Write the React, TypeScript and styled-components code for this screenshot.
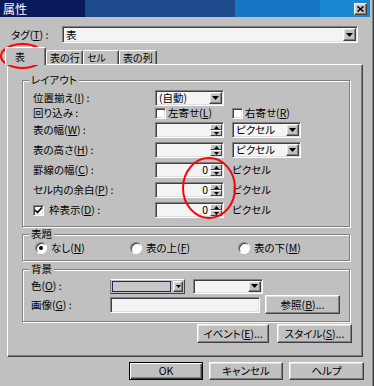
import React from "react";
import styled, { createGlobalStyle, css } from "styled-components";

// classic win32 bevels
const raised = css`
  border: 1px solid;
  border-color: #ffffff #404040 #404040 #ffffff;
  box-shadow: inset -1px -1px 0 #808080, inset 1px 1px 0 #dfdfdf;
`;

const sunken = css`
  border: 1px solid;
  border-color: #808080 #ffffff #ffffff #808080;
  box-shadow: inset 1px 1px 0 #404040, inset -1px -1px 0 #dfdfdf;
`;

const GlobalStyle = createGlobalStyle`
  html, body {
    margin: 0;
    padding: 0;
    background: #c0c0c0;
  }
  body {
    font-family: "Noto Sans CJK JP", "Liberation Sans", sans-serif;
    font-size: 10.5px;
    line-height: 12px;
    font-feature-settings: "palt";
    color: #000;
  }
  * {
    box-sizing: border-box;
  }
  u {
    text-underline-offset: 1px;
  }
`;

const Frame = styled.div`
  position: relative;
  width: 374px;
  height: 386px;
  display: flex;
  flex-direction: column;
  padding-right: 3px;
  border-right: 1px solid #404040;
  box-shadow: inset -1px 0 0 #808080;
  background: #c0c0c0;
  overflow: hidden;
`;

const TitleBar = styled.div`
  height: 17px;
  display: flex;
  align-items: center;
  justify-content: space-between;
  padding: 0 3px;
  background: linear-gradient(
    to right,
    #0b1a5c 0 85px,
    #1d4b8b 85px 235px,
    #1576c6 235px 320px,
    #1b88d3 320px
  );
  color: #fff;
  font-size: 12px;
`;

const CloseButton = styled.div`
  width: 13px;
  height: 12px;
  ${raised};
  background: #c0c0c0;
  display: flex;
  align-items: center;
  justify-content: center;
`;

const TagRow = styled.div`
  margin-top: 9px;
  padding-left: 11px;
  display: flex;
  align-items: center;
`;

const FieldLabel = styled.span<{ $w: number }>`
  width: ${(p) => p.$w}px;
  flex-shrink: 0;
  white-space: nowrap;
  display: flex;
  align-items: center;
  gap: 5px;
`;

const Combo = styled.div<{ $w: number; $h?: number }>`
  width: ${(p) => p.$w}px;
  height: ${(p) => p.$h ?? 16}px;
  ${sunken};
  background: #f4f4f4;
  display: flex;
  align-items: stretch;
  padding: 1px;
`;

const ComboText = styled.span`
  flex: 1;
  padding-left: 2px;
  display: flex;
  align-items: center;
  white-space: nowrap;
`;

const DropButton = styled.div<{ $w?: number }>`
  width: ${(p) => p.$w ?? 13}px;
  flex-shrink: 0;
  ${raised};
  background: #c0c0c0;
  display: flex;
  align-items: center;
  justify-content: center;
`;

const TabStrip = styled.div`
  position: relative;
  z-index: 1;
  margin-top: 4px;
  height: 17px;
  padding-left: 5px;
  display: flex;
  align-items: flex-end;
`;

const Tab = styled.div<{ $w: number; $active?: boolean }>`
  width: ${(p) => p.$w}px;
  height: ${(p) => (p.$active ? 18 : 14)}px;
  margin-bottom: ${(p) => (p.$active ? -1 : 0)}px;
  border: 1px solid;
  border-bottom: none;
  border-color: #ffffff #404040 transparent #ffffff;
  border-radius: 2px 2px 0 0;
  box-shadow: inset -1px 0 0 #808080;
  background: #c0c0c0;
  display: flex;
  align-items: center;
  padding-left: ${(p) => (p.$active ? 9 : 3)}px;
  font-size: 10px;
  white-space: nowrap;
`;

const TabPage = styled.div`
  margin-left: 7px;
  width: 356px;
  height: 293px;
  border: 1px solid;
  border-color: #ffffff #404040 #404040 #ffffff;
  box-shadow: inset -1px -1px 0 #808080;
  padding: 15px 12px 0 14px;
  display: flex;
  flex-direction: column;
`;

const GroupBox = styled.div<{ $mt?: number }>`
  margin-top: ${(p) => p.$mt ?? 0}px;
  border: 1px solid #808080;
  box-shadow: inset 1px 1px 0 #ffffff, 1px 1px 0 #ffffff;
  display: flex;
  flex-direction: column;
`;

const Legend = styled.div`
  align-self: flex-start;
  margin: -7px 0 0 6px;
  padding: 0 2px;
  height: 12px;
  line-height: 12px;
  background: #c0c0c0;
  white-space: nowrap;
`;

const GroupBody = styled.div<{ $pt: number; $pb: number; $pl: number }>`
  padding: ${(p) => p.$pt}px 0 ${(p) => p.$pb}px ${(p) => p.$pl}px;
  display: flex;
  flex-direction: column;
`;

const FormRow = styled.div<{ $h: number; $mt?: number }>`
  height: ${(p) => p.$h}px;
  margin-top: ${(p) => p.$mt ?? 0}px;
  display: flex;
  align-items: center;
  gap: 8px;
  flex-shrink: 0;
`;

const CheckOption = styled.label<{ $w?: number }>`
  width: ${(p) => (p.$w ? `${p.$w}px` : "auto")};
  display: flex;
  align-items: center;
  gap: 2px;
  white-space: nowrap;
`;

const CheckBox = styled.span`
  width: 11px;
  height: 11px;
  flex-shrink: 0;
  ${sunken};
  background: #fff;
  display: flex;
  align-items: center;
  justify-content: center;
`;

const SpinBox = styled.div`
  width: 69px;
  height: 16px;
  ${sunken};
  background: #f4f4f4;
  display: flex;
  align-items: stretch;
  padding: 1px;
`;

const SpinValue = styled.span`
  flex: 1;
  display: flex;
  align-items: center;
  justify-content: flex-end;
  padding-right: 2px;
`;

const SpinButtons = styled.div`
  width: 12px;
  display: flex;
  flex-direction: column;
`;

const SpinHalf = styled.div`
  flex: 1;
  border: 1px solid;
  border-color: #ffffff #404040 #404040 #ffffff;
  background: #c0c0c0;
  display: flex;
  align-items: center;
  justify-content: center;
`;

const UnitText = styled.span`
  white-space: nowrap;
`;

const RadioItem = styled.label<{ $w?: number }>`
  width: ${(p) => (p.$w ? `${p.$w}px` : "auto")};
  display: flex;
  align-items: center;
  gap: 4px;
  white-space: nowrap;
`;

const RadioDot = styled.span<{ $checked?: boolean }>`
  width: 12px;
  height: 12px;
  border-radius: 50%;
  border: 1px solid;
  border-color: #808080 #ffffff #ffffff #808080;
  box-shadow: inset 1px 1px 0 #404040;
  background: #fff;
  display: flex;
  align-items: center;
  justify-content: center;
  &::after {
    content: "";
    display: ${(p) => (p.$checked ? "block" : "none")};
    width: 4px;
    height: 4px;
    border-radius: 50%;
    background: #000;
  }
`;

const ColorCombo = styled.div`
  width: 75px;
  height: 15px;
  border: 1px solid;
  border-color: #ffffff #404040 #404040 #808080;
  background: #c0c0c0;
  display: flex;
  align-items: stretch;
  padding: 1px;
  gap: 2px;
`;

const Swatch = styled.div`
  flex: 1;
  border: 1px solid #1c2a5e;
  background: #c8c8c8;
`;

const TextInput = styled.div<{ $w: number }>`
  width: ${(p) => p.$w}px;
  height: 16px;
  ${sunken};
  background: #f4f4f4;
`;

const PushButton = styled.div<{ $w: number; $h?: number; $default?: boolean }>`
  width: ${(p) => p.$w}px;
  height: ${(p) => p.$h ?? 19}px;
  flex-shrink: 0;
  background: #c0c0c0;
  display: flex;
  align-items: center;
  justify-content: center;
  white-space: nowrap;
  ${(p) =>
    p.$default
      ? css`
          border: 1px solid #000;
          box-shadow: inset 1px 1px 0 #fff, inset -1px -1px 0 #404040,
            inset -2px -2px 0 #808080;
        `
      : raised}
`;

const ActionRow = styled.div`
  margin-top: 2px;
  margin-right: -2px;
  display: flex;
  justify-content: flex-end;
  gap: 8px;
`;

const Footer = styled.div`
  margin-top: 5px;
  padding-right: 6px;
  display: flex;
  justify-content: flex-end;
  gap: 6px;
`;

const Marks = styled.svg`
  position: absolute;
  left: 0;
  top: 0;
  pointer-events: none;
`;

const Tri = ({ up, w = 7, h = 4 }: { up?: boolean; w?: number; h?: number }) => (
  <svg width={w} height={h} viewBox={`0 0 ${w} ${h}`}>
    <polygon
      points={up ? `${w / 2},0 ${w},${h} 0,${h}` : `0,0 ${w},0 ${w / 2},${h}`}
      fill="#000"
    />
  </svg>
);

const Check = () => (
  <svg width="9" height="9" viewBox="0 0 9 9">
    <polyline points="1,4 3.5,6.5 8,1.5" fill="none" stroke="#000" strokeWidth="1.6" />
  </svg>
);

const Spin = ({ value }: { value: string }) => (
  <SpinBox>
    <SpinValue>{value}</SpinValue>
    <SpinButtons>
      <SpinHalf>
        <Tri up w={5} h={3} />
      </SpinHalf>
      <SpinHalf>
        <Tri w={5} h={3} />
      </SpinHalf>
    </SpinButtons>
  </SpinBox>
);

const Select = ({ w, text, h }: { w: number; text?: string; h?: number }) => (
  <Combo $w={w} $h={h}>
    <ComboText>{text}</ComboText>
    <DropButton>
      <Tri />
    </DropButton>
  </Combo>
);

export default function App() {
  return (
    <>
      <GlobalStyle />
      <Frame>
        <TitleBar>
          <span>属性</span>
          <CloseButton>
            <svg width="7" height="6" viewBox="0 0 7 6">
              <path d="M0.5 0.5 L6.5 5.5 M6.5 0.5 L0.5 5.5" stroke="#000" strokeWidth="1.5" />
            </svg>
          </CloseButton>
        </TitleBar>

        <TagRow>
          <FieldLabel $w={51}>
            <span>
              タグ(<u>T</u>) :
            </span>
          </FieldLabel>
          <Select w={296} h={17} text="表" />
        </TagRow>

        <TabStrip>
          <Tab $w={41} $active>
            表
          </Tab>
          <Tab $w={37}>表の行</Tab>
          <Tab $w={36}>セル</Tab>
          <Tab $w={38}>表の列</Tab>
        </TabStrip>

        <TabPage>
          <GroupBox>
            <Legend>レイアウト</Legend>
            <GroupBody $pt={3} $pb={6} $pl={10}>
              <FormRow $h={17}>
                <FieldLabel $w={114}>
                  <span>
                    位置揃え(<u>I</u>) :
                  </span>
                </FieldLabel>
                <Select w={69} text="(自動)" />
              </FormRow>
              <FormRow $h={14}>
                <FieldLabel $w={114}>回り込み :</FieldLabel>
                <CheckOption $w={69}>
                  <CheckBox />
                  <span>
                    左寄せ(<u>L</u>)
                  </span>
                </CheckOption>
                <CheckOption>
                  <CheckBox />
                  <span>
                    右寄せ(<u>R</u>)
                  </span>
                </CheckOption>
              </FormRow>
              <FormRow $h={20}>
                <FieldLabel $w={114}>
                  <span>
                    表の幅(<u>W</u>) :
                  </span>
                </FieldLabel>
                <Spin value="" />
                <Select w={69} text="ピクセル" />
              </FormRow>
              <FormRow $h={20}>
                <FieldLabel $w={114}>
                  <span>
                    表の高さ(<u>H</u>) :
                  </span>
                </FieldLabel>
                <Spin value="" />
                <Select w={69} text="ピクセル" />
              </FormRow>
              <FormRow $h={20}>
                <FieldLabel $w={114}>
                  <span>
                    罫線の幅(<u>C</u>) :
                  </span>
                </FieldLabel>
                <Spin value="0" />
                <UnitText>ピクセル</UnitText>
              </FormRow>
              <FormRow $h={20}>
                <FieldLabel $w={114}>
                  <span>
                    セル内の余白(<u>P</u>) :
                  </span>
                </FieldLabel>
                <Spin value="0" />
                <UnitText>ピクセル</UnitText>
              </FormRow>
              <FormRow $h={20}>
                <FieldLabel $w={114}>
                  <CheckBox>
                    <Check />
                  </CheckBox>
                  <span>
                    枠表示(<u>D</u>) :
                  </span>
                </FieldLabel>
                <Spin value="0" />
                <UnitText>ピクセル</UnitText>
              </FormRow>
            </GroupBody>
          </GroupBox>

          <GroupBox $mt={7}>
            <Legend>表題</Legend>
            <GroupBody $pt={1} $pb={5} $pl={12}>
              <FormRow $h={14}>
                <RadioItem $w={87}>
                  <RadioDot $checked />
                  <span>
                    なし(<u>N</u>)
                  </span>
                </RadioItem>
                <RadioItem $w={100}>
                  <RadioDot />
                  <span>
                    表の上(<u>F</u>)
                  </span>
                </RadioItem>
                <RadioItem>
                  <RadioDot />
                  <span>
                    表の下(<u>M</u>)
                  </span>
                </RadioItem>
              </FormRow>
            </GroupBody>
          </GroupBox>

          <GroupBox $mt={8}>
            <Legend>背景</Legend>
            <GroupBody $pt={0} $pb={7} $pl={8}>
              <FormRow $h={16} $mt={3}>
                <FieldLabel $w={71}>
                  <span>
                    色(<u>O</u>) :
                  </span>
                </FieldLabel>
                <ColorCombo>
                  <Swatch />
                  <DropButton $w={10}>
                    <Tri w={5} h={3} />
                  </DropButton>
                </ColorCombo>
                <Select w={70} h={15} />
              </FormRow>
              <FormRow $h={19} $mt={1}>
                <FieldLabel $w={71}>
                  <span>
                    画像(<u>G</u>) :
                  </span>
                </FieldLabel>
                <TextInput $w={150} />
                <PushButton $w={75} style={{ marginLeft: -3 }}>
                  <span>
                    参照(<u>B</u>)...
                  </span>
                </PushButton>
              </FormRow>
            </GroupBody>
          </GroupBox>

          <ActionRow>
            <PushButton $w={72}>
              <span>
                イベント(<u>E</u>)...
              </span>
            </PushButton>
            <PushButton $w={75}>
              <span>
                スタイル(<u>S</u>)...
              </span>
            </PushButton>
          </ActionRow>
        </TabPage>

        <Footer>
          <PushButton $w={74} $h={18} $default>
            OK
          </PushButton>
          <PushButton $w={74} $h={18}>
            キャンセル
          </PushButton>
          <PushButton $w={75} $h={18}>
            ヘルプ
          </PushButton>
        </Footer>

        <Marks width="374" height="386" viewBox="0 0 374 386">
          <ellipse cx="22.5" cy="56" rx="21.5" ry="12" fill="none" stroke="#f00" strokeWidth="2" />
          <ellipse cx="209" cy="188" rx="26" ry="30" fill="none" stroke="#f00" strokeWidth="2" />
        </Marks>
      </Frame>
    </>
  );
}
